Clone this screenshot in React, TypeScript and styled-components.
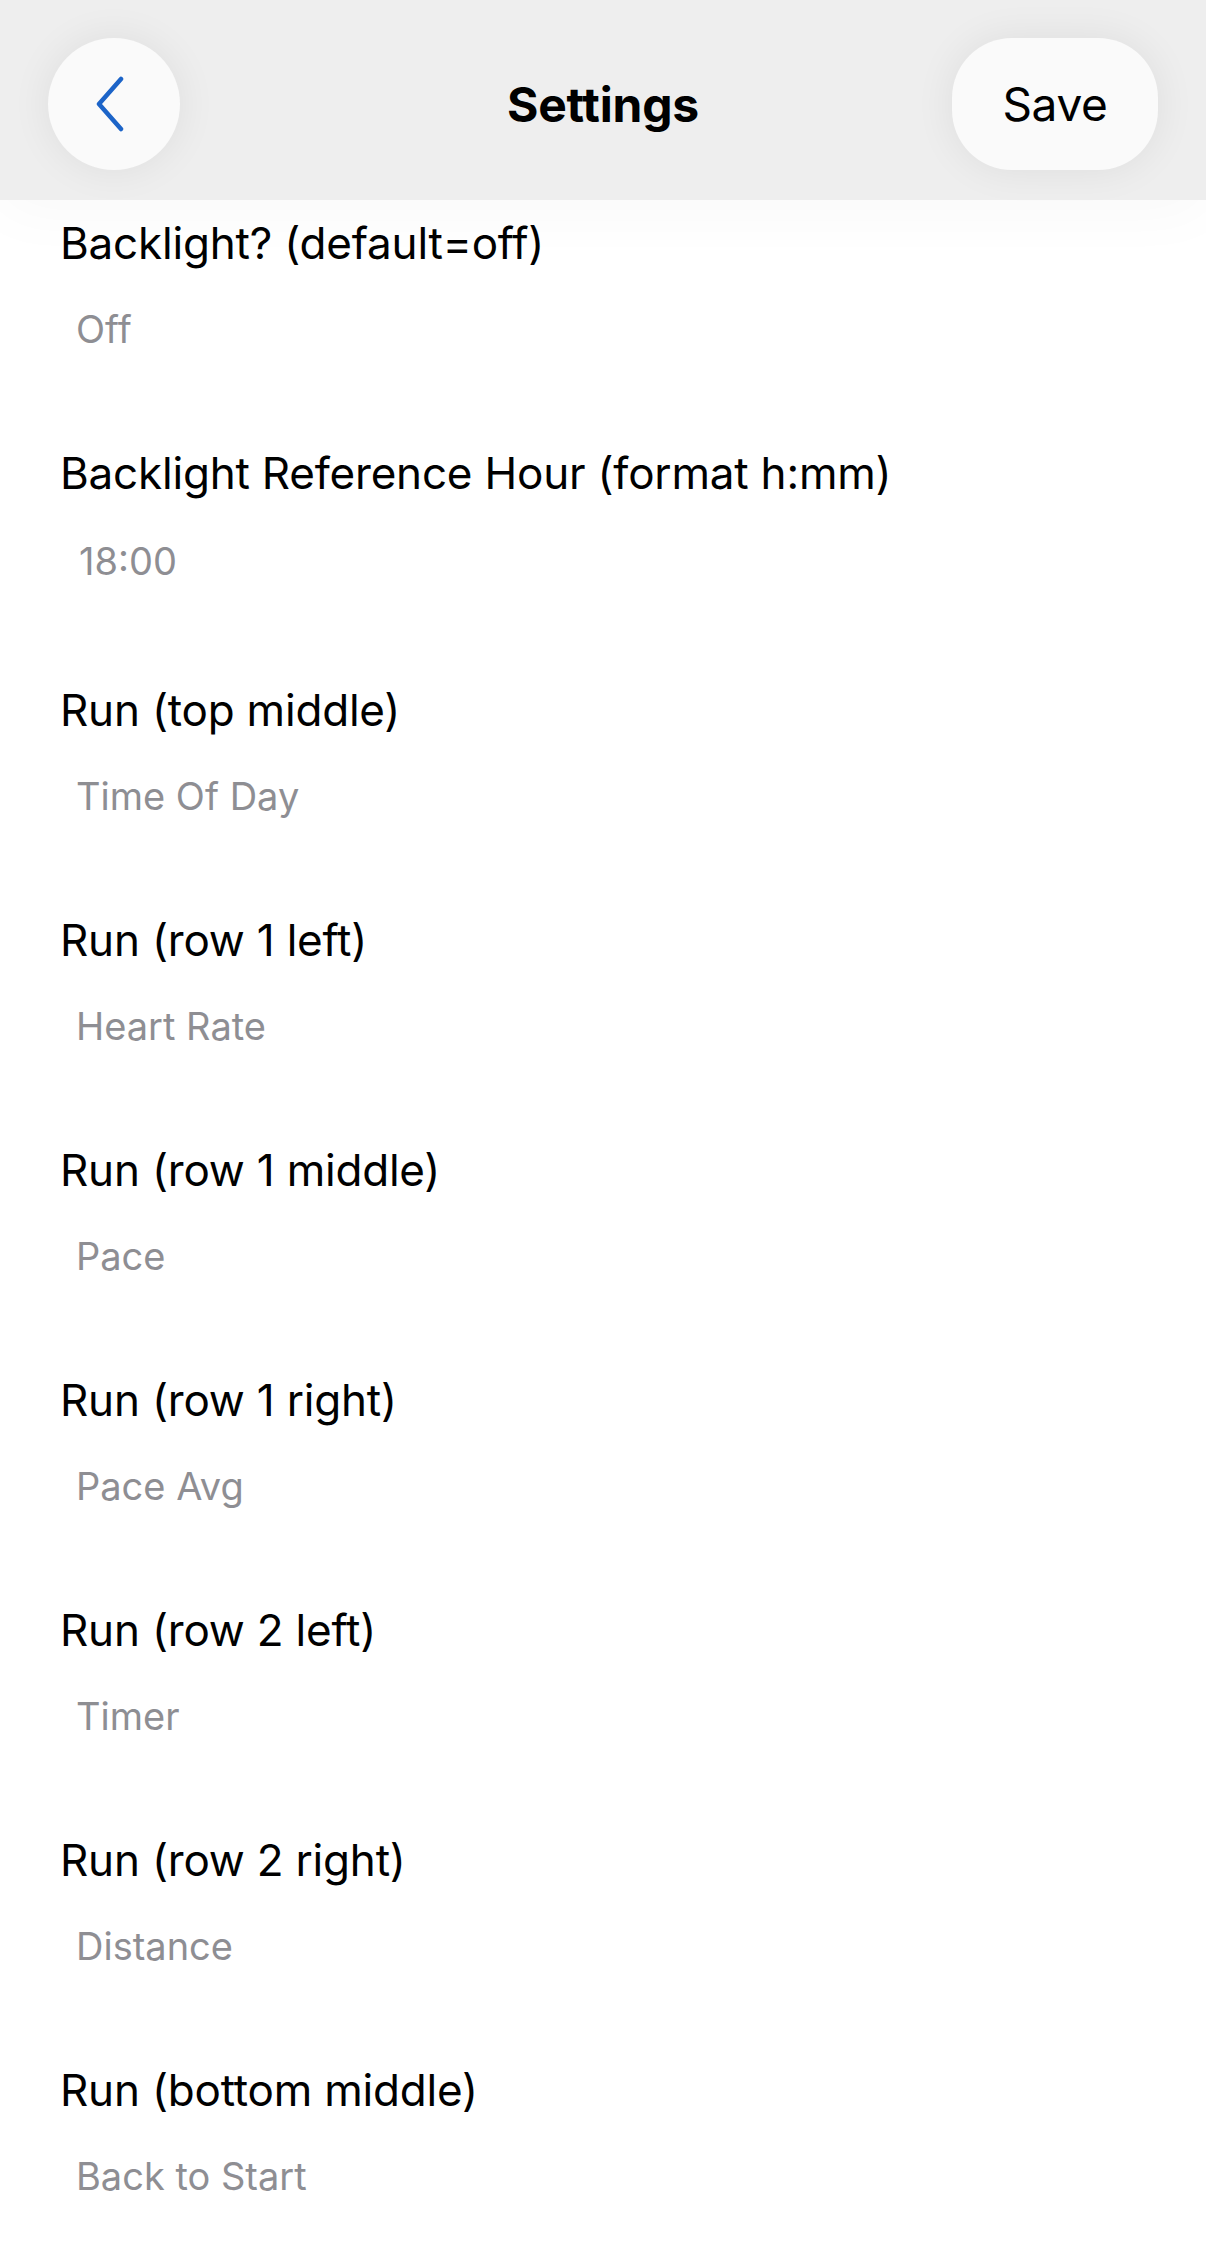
import React from 'react'
import styled, { createGlobalStyle } from 'styled-components'

interface Setting {
	label: string
	value: string
	input?: boolean
}

const settings: Setting[] = [
	{ label: 'Backlight? (default=off)', value: 'Off' },
	{ label: 'Backlight Reference Hour (format h:mm)', value: '18:00', input: true },
	{ label: 'Run (top middle)', value: 'Time Of Day' },
	{ label: 'Run (row 1 left)', value: 'Heart Rate' },
	{ label: 'Run (row 1 middle)', value: 'Pace' },
	{ label: 'Run (row 1 right)', value: 'Pace Avg' },
	{ label: 'Run (row 2 left)', value: 'Timer' },
	{ label: 'Run (row 2 right)', value: 'Distance' },
	{ label: 'Run (bottom middle)', value: 'Back to Start' },
]

export default function App() {
	return (
		<>
			<GlobalStyle />
			<Page>
				<Header>
					<BackButton aria-label="Back">
						<svg width="34" height="56" viewBox="0 0 34 56" fill="none">
							<path d="M28 3 L6 28 L28 53" stroke="#1c64c8" strokeWidth="4.5" strokeLinecap="round" strokeLinejoin="round" />
						</svg>
					</BackButton>
					<Title>Settings</Title>
					<SaveButton>Save</SaveButton>
				</Header>
				<List>
					{settings.map((s) => (
						<Row key={s.label} $input={s.input}>
							<Label>{s.label}</Label>
							<Value $input={s.input}>{s.value}</Value>
						</Row>
					))}
				</List>
			</Page>
		</>
	)
}

const GlobalStyle = createGlobalStyle`
	html, body {
		margin: 0;
		padding: 0;
		background: #ffffff;
	}
	body {
		font-family: Inter, 'Liberation Sans', sans-serif;
		-webkit-font-smoothing: antialiased;
	}
`

const Page = styled.div`
	width: 1206px;
	height: 2250px;
	overflow: hidden;
	background: #ffffff;
`

const Header = styled.header`
	position: relative;
	z-index: 2;
	height: 200px;
	box-sizing: border-box;
	padding: 38px 48px 30px 48px;
	background: #eeeeee;
	display: grid;
	grid-template-columns: 1fr auto 1fr;
	align-items: center;
	box-shadow: 0 10px 60px rgba(0, 0, 0, 0.03);
`

const BackButton = styled.button`
	justify-self: start;
	width: 132px;
	height: 132px;
	border-radius: 50%;
	border: none;
	background: #fafafa;
	box-shadow: 0 0 40px rgba(0, 0, 0, 0.07);
	display: flex;
	align-items: center;
	justify-content: center;
	padding: 0 8px 0 0;
`

const Title = styled.h1`
	margin: 0;
	font-size: 48px;
	font-weight: 700;
	color: #000;
	letter-spacing: -0.2px;
`

const SaveButton = styled.button`
	justify-self: end;
	width: 206px;
	height: 132px;
	border-radius: 60px;
	border: none;
	background: #fafafa;
	box-shadow: 0 0 40px rgba(0, 0, 0, 0.07);
	font-family: Inter, 'Liberation Sans', sans-serif;
	font-size: 46px;
	color: #000;
	letter-spacing: -0.3px;
	padding: 0;
`

const List = styled.main`
	padding: 15px 0 0 60px;
`

const Row = styled.section<{ $input?: boolean }>`
	display: flex;
	flex-direction: column;
	padding-bottom: ${({ $input }) => ($input ? 96 : 91)}px;
`

const Label = styled.div`
	height: 56px;
	line-height: 56px;
	font-size: 44px;
	color: #000;
	letter-spacing: -0.2px;
`

const Value = styled.div<{ $input?: boolean }>`
	margin-top: ${({ $input }) => ($input ? 35 : 33)}px;
	padding-left: ${({ $input }) => ($input ? 19 : 16)}px;
	height: 50px;
	line-height: 50px;
	font-size: 38px;
	color: #8e8e93;
`
